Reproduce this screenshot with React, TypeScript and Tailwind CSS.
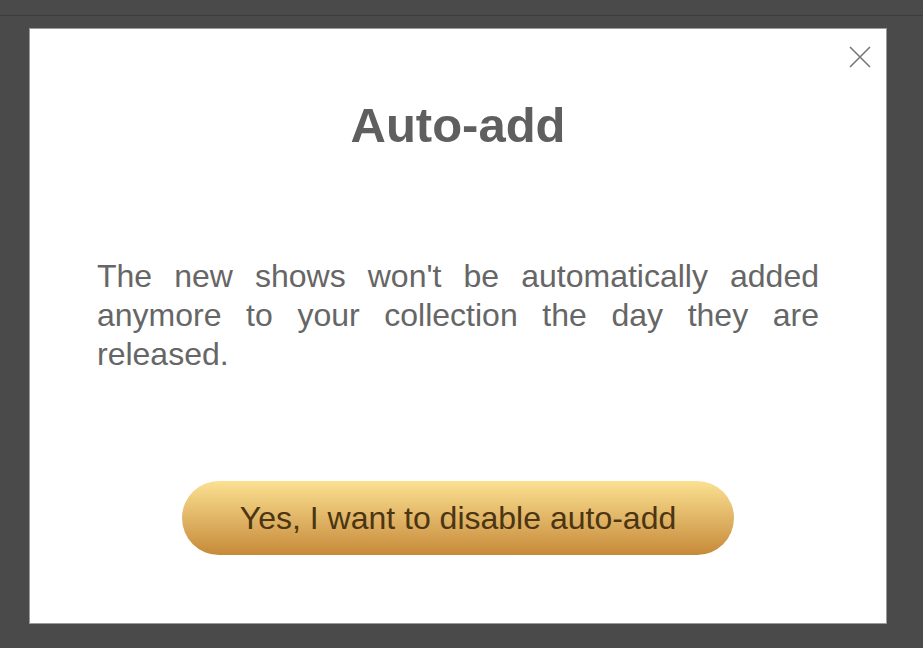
import React from "react";

export default function App() {
  return (
    <div className="w-[923px] h-[648px] bg-[#4a4a4a] overflow-hidden flex flex-col" style={{ fontFamily: '"Liberation Sans", Arial, sans-serif' }}>
      <div className="h-[15px] shrink-0" />
      <div className="h-px bg-[#3c3c3c] shrink-0" />
      <div className="pl-[29px] pt-[12px]">
        <div className="relative w-[858px] h-[596px] bg-white border border-[#9a9a9a] flex flex-col items-center">
          <button className="absolute right-[14px] top-[16px] w-[24px] h-[24px] flex items-center justify-center">
            <svg width="24" height="24" viewBox="0 0 24 24">
              <path d="M2 2 L22 22 M22 2 L2 22" stroke="#777" strokeWidth="1.6" fill="none" />
            </svg>
          </button>
          <h1 className="mt-[68px] text-[49px] leading-[56px] font-bold text-[#5f5f5f]">Auto-add</h1>
          <p className="mt-[104px] px-[67px] text-[32px] leading-[39px] text-[#666] text-justify w-full">
            The new shows won't be automatically added anymore to your collection the day they are released.
          </p>
          <button className="mt-[107px] w-[552px] h-[74px] rounded-full bg-gradient-to-b from-[#fbe192] to-[#c68a38] text-[#4b3512] text-[32px] leading-none">
            Yes, I want to disable auto-add
          </button>
        </div>
      </div>
    </div>
  );
}
